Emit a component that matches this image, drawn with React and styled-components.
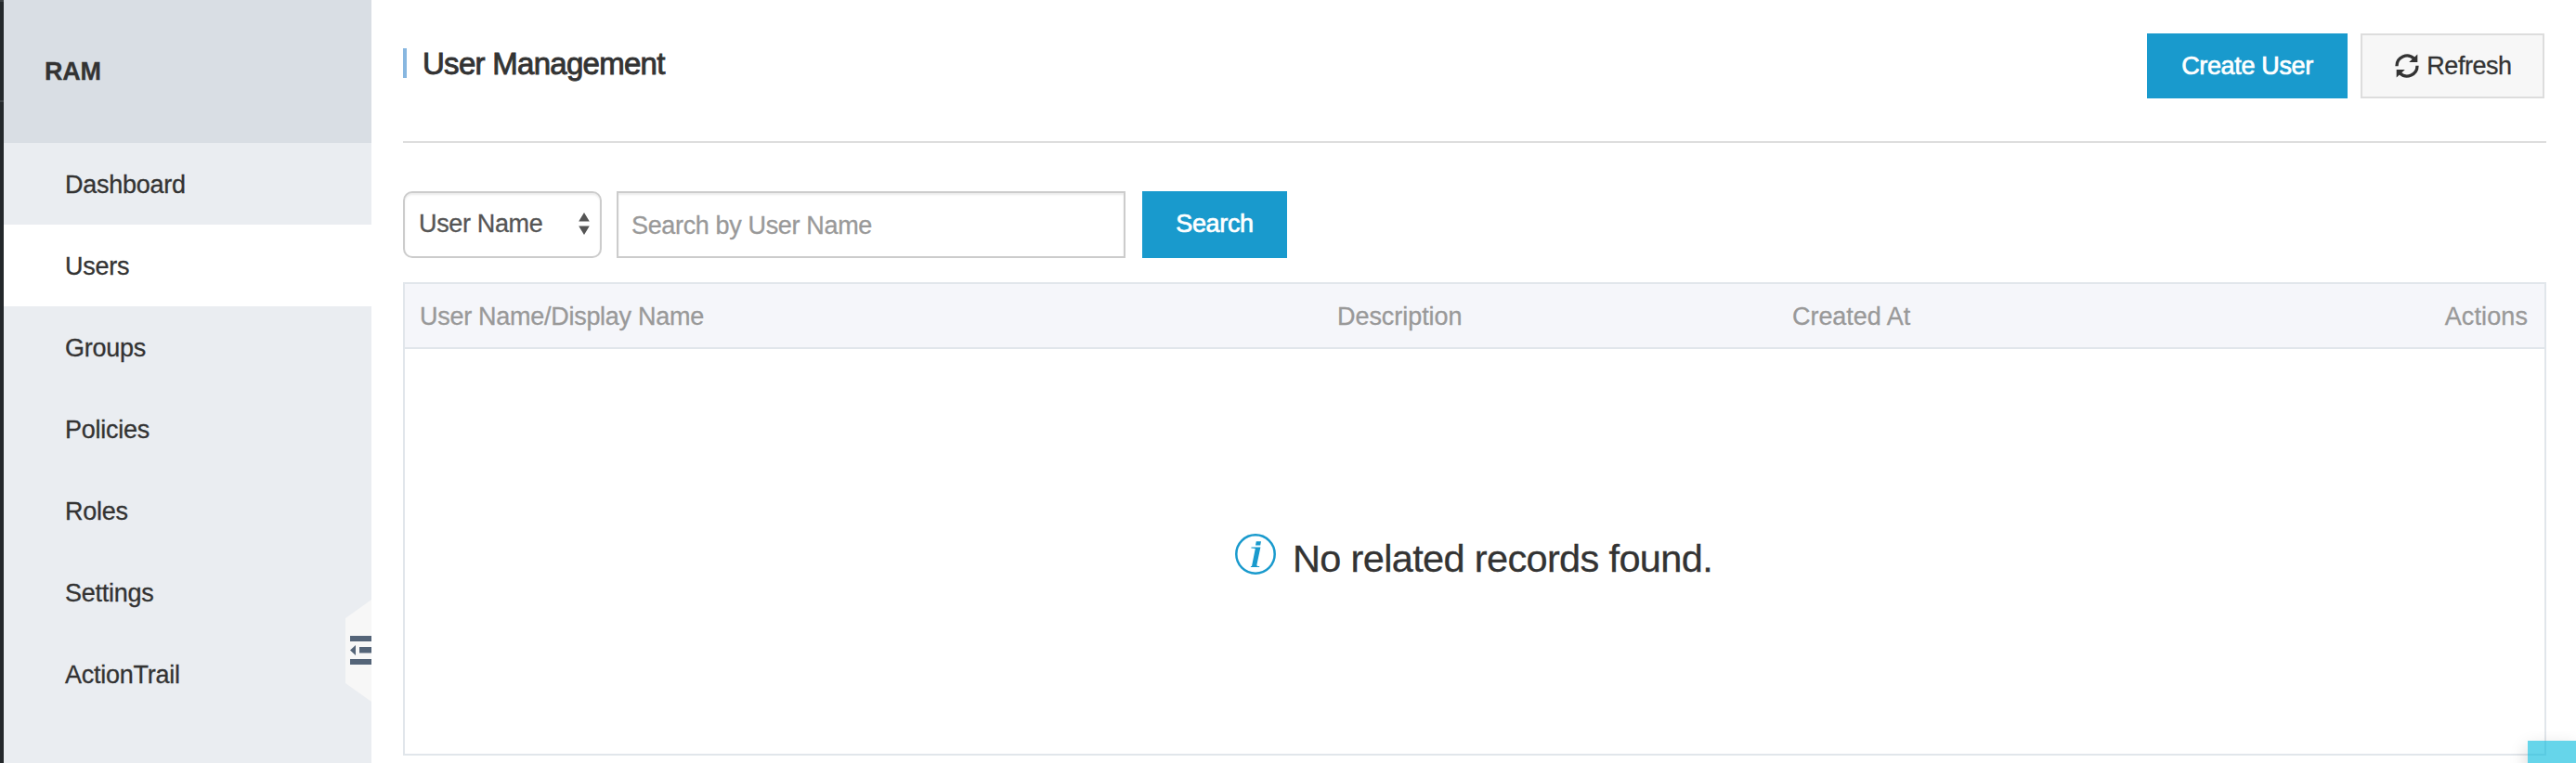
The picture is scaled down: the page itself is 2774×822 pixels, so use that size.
import React from 'react';
import styled, { createGlobalStyle, css } from 'styled-components';

const GlobalStyle = createGlobalStyle`
  * { box-sizing: border-box; }
  html, body { margin: 0; padding: 0; }
  body {
    background: #fff;
    color: #333;
    font-family: "Liberation Sans", Arial, sans-serif;
    font-size: 27px;
    letter-spacing: -0.25px;
    -webkit-text-stroke: 0.3px;
  }
`;

const Page = styled.div`
  position: relative;
  display: flex;
  height: 822px;
  overflow: hidden;
`;

const ProductRail = styled.div`
  flex: none;
  width: 4px;
  background: #24282b;
  border-top: 2px solid #3b3f42;
`;

const RailDivider = styled.div`
  height: 2px;
  margin-top: 106px;
  background: #3b3f42;
`;

const Sidebar = styled.aside`
  position: relative;
  flex: none;
  width: 396px;
  background: #eaedf1;
`;

const SidebarTitle = styled.div`
  height: 154px;
  padding: 1px 0 0 44px;
  display: flex;
  align-items: center;
  background: #d9dee4;
  font-weight: bold;
`;

const NavItem = styled.a`
  display: flex;
  align-items: center;
  height: 88px;
  padding: 2px 0 0 66px;
  background: ${({ $active }) => ($active ? '#fff' : 'transparent')};
`;

const CollapseHandle = styled.button`
  position: absolute;
  right: 0;
  top: 646px;
  width: 28px;
  height: 110px;
  padding: 0;
  border: 0;
  background: none;
  svg { display: block; }
`;

const Main = styled.main`
  flex: 1;
  display: flex;
  flex-direction: column;
  padding: 0 32px 8px 34px;
`;

const PageHeader = styled.header`
  flex: none;
  display: flex;
  align-items: flex-start;
  height: 154px;
  padding: 36px 2px 0 0;
  border-bottom: 2px solid #ddd;
`;

const Title = styled.h1`
  flex: 1;
  margin: 16px 0 0;
  padding-left: 17px;
  border-left: 4px solid #88b7e0;
  font-size: 33px;
  font-weight: normal;
  letter-spacing: -0.72px;
  line-height: 34px;
  height: 32px;
  -webkit-text-stroke: 0.9px #333;
`;

const Button = styled.button`
  display: flex;
  align-items: center;
  justify-content: center;
  gap: 8px;
  width: ${({ $width }) => $width}px;
  height: ${({ $height }) => $height || 70}px;
  padding: 0 0 ${({ $height }) => ($height ? 2 : 0)}px;
  border: 2px solid #ddd;
  background: #f7f7f7;
  color: #333;
  font: inherit;
  letter-spacing: -0.45px;
  ${({ $primary }) =>
    $primary
      ? css`
          border-color: #199acd;
          background: #199acd;
          color: #fff;
          letter-spacing: -0.35px;
          -webkit-text-stroke: 0.7px #fff;
        `
      : css`
          padding-left: 2px;
        `}
`;

const HeaderActions = styled.div`
  display: flex;
  gap: 14px;
`;

const SearchBar = styled.form`
  flex: none;
  display: flex;
  height: 72px;
  margin: 52px 0 26px;
`;

const field = css`
  border: 2px solid #ccc;
  background: #fff;
  box-shadow: inset 0 2px 2px rgba(0, 0, 0, 0.075);
  font: inherit;
  letter-spacing: -0.35px;
`;

const FieldSelect = styled.button`
  ${field}
  display: flex;
  align-items: center;
  justify-content: space-between;
  width: 214px;
  margin-right: 16px;
  padding: 0 11px 2px 15px;
  border-radius: 10px;
  color: #555;
`;

const SearchInput = styled.input`
  ${field}
  width: 548px;
  margin-right: 18px;
  padding: 2px 14px 0;
  border-radius: 0;
  outline: 0;
  &::placeholder { color: #999; opacity: 1; }
`;

const Table = styled.section`
  flex: 1;
  display: flex;
  flex-direction: column;
  border: 2px solid #e1e6eb;
`;

const HeadRow = styled.div`
  display: grid;
  grid-template-columns: 988px 490px 1fr auto;
  align-items: center;
  height: 70px;
  padding: 2px 18px 0 16px;
  border-bottom: 2px solid #e1e6eb;
  background: #f5f6fa;
  color: #999;
`;

const HeadCell = styled.span`
  letter-spacing: ${({ $tracking }) => $tracking}px;
`;

const EmptyState = styled.div`
  flex: 1;
  display: flex;
  align-items: center;
  justify-content: center;
  padding: 15px 2px 0 0;
  font-size: 41.5px;
  letter-spacing: -0.65px;
`;

const InfoIcon = styled.svg`
  flex: none;
  margin: 0 18px 9px 0;
`;

const HelpTab = styled.div`
  position: absolute;
  right: 0;
  bottom: 0;
  width: 52px;
  height: 24px;
  background: rgba(0, 185, 220, 0.6);
  box-shadow: 0 8px 20px rgba(0, 0, 0, 0.2);
`;

const navItems = ['Dashboard', 'Users', 'Groups', 'Policies', 'Roles', 'Settings', 'ActionTrail'];

const columns = [
  { label: 'User Name/Display Name', tracking: -0.28 },
  { label: 'Description', tracking: -0.05 },
  { label: 'Created At', tracking: -0.05 },
  { label: 'Actions', tracking: 0.1 },
];

export default function App() {
  return (
    <Page>
      <GlobalStyle />
      <ProductRail>
        <RailDivider />
      </ProductRail>
      <Sidebar>
        <SidebarTitle>RAM</SidebarTitle>
        <nav>
          {navItems.map((name) => (
            <NavItem key={name} $active={name === 'Users'}>{name}</NavItem>
          ))}
        </nav>
        <CollapseHandle aria-label="Collapse menu">
          <svg width="28" height="110" viewBox="0 0 28 110">
            <path d="M28 0V110L0 90V20Z" fill="#f7f7f7" />
            <path d="M5 39H28V45H5ZM15 51H28V57.5H15ZM5 64H28V70H5ZM5 54.5L11 49V60Z" fill="#546478" />
          </svg>
        </CollapseHandle>
      </Sidebar>
      <Main>
        <PageHeader>
          <Title>User Management</Title>
          <HeaderActions>
            <Button $primary $width={216}>Create User</Button>
            <Button $width={198}>
              <svg width="26" height="26" viewBox="0 0 26 26">
                <path d="M2 13.2A11 11 0 0 1 20.5 5" fill="none" stroke="#333" strokeWidth="3.3" />
                <path d="M24.3 .5V9H15.2Z" fill="#333" />
                <path d="M24 12.8A11 11 0 0 1 5.5 21" fill="none" stroke="#333" strokeWidth="3.3" />
                <path d="M1.7 25.5V17H10.8Z" fill="#333" />
              </svg>
              Refresh
            </Button>
          </HeaderActions>
        </PageHeader>
        <SearchBar onSubmit={(e) => e.preventDefault()}>
          <FieldSelect type="button">
            User Name
            <svg width="12" height="24" viewBox="0 0 12 24">
              <path d="M6 0L11.8 9.5H.2ZM6 24L11.8 14.5H.2Z" fill="#555" />
            </svg>
          </FieldSelect>
          <SearchInput placeholder="Search by User Name" />
          <Button $primary $width={156} $height={72}>Search</Button>
        </SearchBar>
        <Table>
          <HeadRow>
            {columns.map(({ label, tracking }) => (
              <HeadCell key={label} $tracking={tracking}>{label}</HeadCell>
            ))}
          </HeadRow>
          <EmptyState>
            <InfoIcon width="44" height="44" viewBox="0 0 44 44">
              <circle cx="22" cy="22" r="20.7" fill="none" stroke="#199acd" strokeWidth="2.5" />
              <path d="M22.8 8.3H28L27.2 12.6H22ZM17.5 14.4H27.4L23.4 33.4Q23.2 34.8 24.4 34.9L26.3 35.1L26.1 36H16.8L17 35.1L18 34.9L21.8 16L17.3 15.4Z" fill="#199acd" />
            </InfoIcon>
            No related records found.
          </EmptyState>
        </Table>
      </Main>
      <HelpTab />
    </Page>
  );
}
